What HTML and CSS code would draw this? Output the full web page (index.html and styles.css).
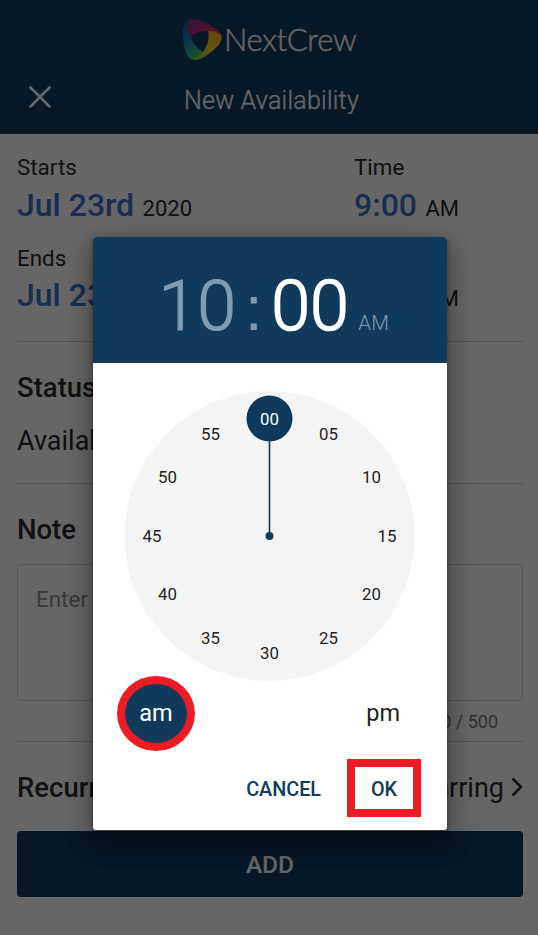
FILE: index.html
```html
<!DOCTYPE html>
<html lang="en">
<head>
<meta charset="utf-8">
<title>New Availability</title>
<link rel="stylesheet" href="styles.css">
</head>
<body>
<div class="page">
  <header class="top">
    <div class="brand">
      <svg class="logo" width="41" height="43" viewBox="0 0 41 43">
        <defs>
          <linearGradient id="blue" x1="0" y1="0" x2="0.4" y2="1"><stop offset="0" stop-color="#1b5c9e"/><stop offset="0.5" stop-color="#0b7fb8"/><stop offset="1" stop-color="#37c27c"/></linearGradient>
          <linearGradient id="pink" x1="0" y1="0" x2="1" y2="0.6"><stop offset="0" stop-color="#6b2f8e"/><stop offset="0.55" stop-color="#b52b78"/><stop offset="1" stop-color="#e73a4c"/></linearGradient>
          <linearGradient id="gold" x1="1" y1="0" x2="0" y2="1"><stop offset="0" stop-color="#ff9f2c"/><stop offset="0.5" stop-color="#f6d52c"/><stop offset="1" stop-color="#7cc443"/></linearGradient>
        </defs>
        <path fill="url(#blue)" d="M6 2C2 4 0 11 1 20C2 32 5 42 12 42C16 42 19 38 20 33C13 29 9 23 9 17L10 12C7 9 5 6 6 2Z"/>
        <path fill="url(#pink)" d="M6 2C11-2 24 4 31 9C37 13 40 16 40 19C35 15 30 13 25 13C17 13 11 16 9 19C5 12 4 6 6 2Z"/>
        <path fill="url(#gold)" d="M26 13C33 13 39 16 40 19C40 25 32 33 22 39C17 42 13 43 10 41C20 38 29 27 26 13Z"/>
      </svg>
      <span class="brand-name">NextCrew</span>
    </div>
    <div class="title-row">
      <svg class="close" width="22" height="22" viewBox="0 0 22 22"><path d="M1.5 1.5L20.5 20.5M20.5 1.5L1.5 20.5"/></svg>
      <h1 class="title">New Availability</h1>
    </div>
  </header>
  <main class="form">
    <section class="dates">
      <div class="field"><div class="label">Starts</div><div class="value"><b>Jul 23rd</b> 2020</div></div>
      <div class="field"><div class="label">Time</div><div class="value"><b>9:00</b> AM</div></div>
      <div class="field"><div class="label low">Ends</div><div class="value"><b>Jul 23</b></div></div>
      <div class="field"><div class="label">&nbsp;</div><div class="value"><b>9:00</b> AM</div></div>
    </section>
    <section class="status">
      <h2>Status</h2>
      <div class="text">Available</div>
    </section>
    <section class="note">
      <h2>Note</h2>
      <div class="box">Enter</div>
      <div class="count">0 / 500</div>
    </section>
    <section class="recurring">
      <h2>Recurring</h2>
      <div class="text choice">Recurring <svg width="12" height="20" viewBox="0 0 12 20"><path d="M1.5 1.5L10 10L1.5 18.5"/></svg></div>
    </section>
    <div class="add">ADD</div>
  </main>
  <div class="band"></div>
</div>
<div class="scrim">
  <div class="dialog">
    <div class="time">
      <span class="dim hour">10</span><span class="dim colon">:</span><span class="minute">00</span><span class="dim ampm">AM</span>
    </div>
    <svg class="clock" width="290" height="290" viewBox="-145 -145 290 290">
      <circle class="face" cx="-0.5" r="145"/>
      <path class="hand" d="M-0.5 0V-100"/>
      <circle class="dot" cx="-0.5" r="4"/>
      <circle class="dot" cx="-0.5" cy="-117.5" r="23"/>
      <g class="nums">
        <text class="sel" x="-0.5" y="-111.5">00</text>
        <text x="58.5" y="-96">05</text>
        <text x="101.5" y="-53">10</text>
        <text x="117" y="6">15</text>
        <text x="101.5" y="64">20</text>
        <text x="58.5" y="108">25</text>
        <text x="-0.5" y="123">30</text>
        <text x="-59.5" y="108">35</text>
        <text x="-102.5" y="64">40</text>
        <text x="-118" y="6">45</text>
        <text x="-102.5" y="-53">50</text>
        <text x="-59.5" y="-96">55</text>
      </g>
    </svg>
    <div class="periods"><div class="am">am</div><div class="pm">pm</div></div>
    <div class="actions"><div class="cancel">CANCEL</div><div class="ok">OK</div></div>
  </div>
</div>
</body>
</html>
```
FILE: styles.css
```css
* { box-sizing: border-box; }
body { margin: 0; font-family: Roboto, "Liberation Sans", sans-serif; color: #2b2b2b; background: #fff; overflow: hidden; }
h1, h2 { margin: 0; }
.page { width: 538px; height: 935px; display: flex; flex-direction: column; background: #fff; }
.top { height: 134px; background: #103a5c; color: #fff; padding-top: 18px; }
.brand { display: flex; align-items: center; height: 43px; padding-left: 182px; }
.brand-name { font-family: Lato, sans-serif; font-weight: 300; font-size: 31px; line-height: 43px; letter-spacing: -0.3px; margin-left: 1px; white-space: nowrap; -webkit-text-stroke: 0.4px #fff; }
.title-row { display: flex; align-items: center; height: 40px; margin-top: 20px; padding-left: 29px; }
.close { margin-top: -8px; fill: none; stroke: #fff; stroke-width: 2.6; stroke-linecap: round; }
.title { margin-left: 133px; font-weight: 300; font-size: 25px; line-height: 40px; letter-spacing: 0.24px; white-space: nowrap; -webkit-text-stroke: 0.3px #fff; }
.form { padding: 20px 15px 0 17px; }
.dates { display: grid; grid-template-columns: 337px 1fr; row-gap: 19px; padding-bottom: 26px; border-bottom: 1px solid #ccc; }
.label { font-size: 22.4px; line-height: 26px; height: 28px; }
.low { line-height: 28px; }
.value { margin-top: 3px; font-size: 22px; line-height: 40px; height: 40px; white-space: nowrap; }
.value b { font-size: 32px; font-weight: 500; color: #3c70cb; margin-right: 3px; }
h2 { font-size: 27.5px; line-height: 34px; font-weight: 500; }
.text { font-size: 27px; line-height: 34px; }
.status { padding: 29px 0 25px; border-bottom: 1px solid #ccc; }
.status .text { margin-top: 19px; }
.note { padding: 29px 0 8px; border-bottom: 1px solid #ccc; }
.box { margin-top: 17px; height: 137px; border: 1px solid #d2d2d2; border-radius: 4px; padding: 20px 18px; font-size: 22.4px; line-height: 28px; color: #909090; }
.count { margin-top: 8px; padding-right: 25px; text-align: right; font-size: 18px; line-height: 25px; height: 24px; color: #777; }
.recurring { display: flex; justify-content: space-between; padding: 29px 0 26px; }
.recurring h2, .choice { height: 34px; line-height: 33px; }
.choice { display: flex; align-items: center; gap: 7px; }
.choice svg { margin-top: -3px; fill: none; stroke: #2b2b2b; stroke-width: 2.6; }
.add { height: 66px; border-radius: 4px; background: #103a5c; color: #fff; text-align: center; font-size: 24.5px; font-weight: 500; line-height: 68px; }
.band { margin-top: auto; height: 21px; background: #fafafa; }
.scrim { position: absolute; inset: 0; display: flex; align-items: flex-start; background: rgba(0, 0, 0, 0.6); }
.dialog { margin: 237px 0 0 92.5px; width: 354.5px; height: 593px; border-radius: 3px; overflow: hidden; background: #fff; box-shadow: 0 14px 20px 6px rgba(0, 0, 0, 0.18), 0 6px 30px 5px rgba(0, 0, 0, 0.14), 0 1px 4px rgba(0, 0, 0, 0.35); }
.time { display: flex; align-items: baseline; height: 126px; padding: 27px 0 0 66px; background: #103a5c; color: #fff; font-size: 70px; font-weight: 300; line-height: 84px; }
.hour { -webkit-text-stroke: 1.2px #819bb0; }
.minute { -webkit-text-stroke: 1.6px #fff; }
.dim { color: #819bb0; }
.colon { width: 35px; text-align: center; font-family: "Liberation Sans", sans-serif; font-size: 63px; }
.ampm { margin-left: 9.5px; font-size: 20.5px; line-height: 24px; }
.clock { display: block; margin: 28px 0 0 32px; overflow: visible; }
.face { fill: #f4f4f4; }
.hand { stroke: #103a5c; stroke-width: 1.6; }
.dot { fill: #103a5c; }
.nums { font-size: 16.8px; text-anchor: middle; fill: #222; }
.nums .sel { fill: #fff; }
.periods { display: flex; justify-content: space-between; align-items: center; height: 75px; margin: -5px 0 0; padding: 0 47px 0 24.5px; font-size: 23.5px; color: #222; }
.am { width: 78px; height: 75px; border: 8px solid #ed1c24; border-radius: 50%; background: #103a5c; color: #fff; text-align: center; line-height: 59px; }
.pm { line-height: 59px; }
.actions { display: flex; justify-content: flex-end; margin-top: 8px; padding-right: 26px; font-size: 19.8px; font-weight: 500; color: #103a5c; }
.cancel { line-height: 62px; margin-right: 26px; }
.ok { width: 74px; height: 58px; border: 8px solid #ed1c24; text-align: center; line-height: 46px; }
```
